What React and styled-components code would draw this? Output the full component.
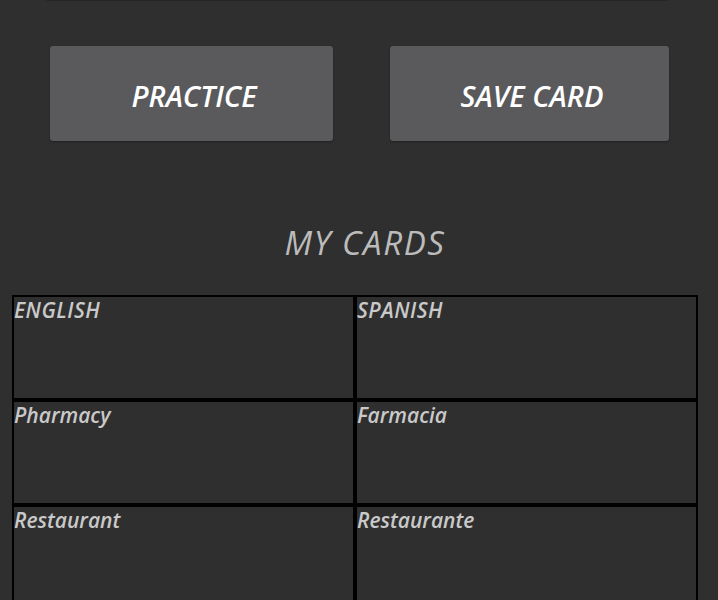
import styled, { createGlobalStyle } from "styled-components";

const GlobalStyle = createGlobalStyle`
    html, body {
        margin: 0;
        padding: 0;
        background-color: #2f2f2f;
    }
    body {
        font-family: "Open Sans", "DejaVu Sans Condensed", sans-serif;
        font-style: italic;
    }
`;

const Page = styled.div`
    width: 718px;
    height: 600px;
    overflow: hidden;
    background-color: #2f2f2f;
`;

const TopLine = styled.div`
    margin: 0 50px 0 46px;
    border-bottom: 1px solid #262626;
`;

const ButtonRow = styled.div`
    display: flex;
    padding: 45px 49px 0 50px;
    gap: 57px;
`;

const ActionButton = styled.button`
    flex: 0 0 ${props => props.width}px;
    height: 95px;
    padding: 3px 0 0 5px;
    border: none;
    border-radius: 3px;
    background-color: #5a5a5c;
    box-shadow: 0 1px 2px rgba(0, 0, 0, 0.35);
    color: #ffffff;
    font-family: inherit;
    font-style: italic;
    font-weight: 600;
    font-size: 29px;
    cursor: pointer;
`;

const Title = styled.h2`
    margin: 82px 0 0;
    padding-left: 12px;
    text-align: center;
    line-height: 40px;
    font-size: 33px;
    font-weight: 500;
    font-style: italic;
    letter-spacing: 1.6px;
    color: #bcbcbc;
`;

const CardGrid = styled.div`
    display: grid;
    grid-template-columns: 343px 343px;
    grid-auto-rows: 105px;
    margin: 32px 0 0 12px;
`;

const Cell = styled.div`
    border: 2px solid #000000;
    color: #c9c9c9;
    font-size: 21px;
    font-weight: 600;
    line-height: 24px;
    padding: 1px 0 0 0;
    letter-spacing: ${props => props.$header ? "0.5px" : "0"};
    text-transform: ${props => props.$header ? "uppercase" : "none"};
`;

const cards = [
    ["Pharmacy", "Farmacia"],
    ["Restaurant", "Restaurante"],
];

export default function App() {
    return (
        <Page>
            <GlobalStyle />
            <TopLine />
            <ButtonRow>
                <ActionButton width={283}>PRACTICE</ActionButton>
                <ActionButton width={279}>SAVE CARD</ActionButton>
            </ButtonRow>
            <Title>MY CARDS</Title>
            <CardGrid>
                <Cell $header>English</Cell>
                <Cell $header>Spanish</Cell>
                {cards.map(([en, es]) => (
                    <>
                        <Cell key={en}>{en}</Cell>
                        <Cell key={es}>{es}</Cell>
                    </>
                ))}
            </CardGrid>
        </Page>
    );
}
